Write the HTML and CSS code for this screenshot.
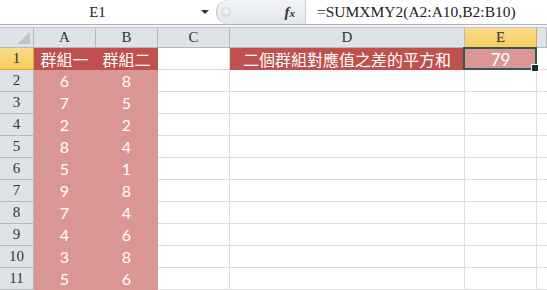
FILE: index.html
```html
<!DOCTYPE html>
<html lang="zh-TW">
<head>
    <meta charset="UTF-8">
    <title>SUMXMY2</title>
    <link rel="stylesheet" href="styles.css">
</head>
<body>
    <div class="formula-bar">
        <div class="name-box">
            <span class="name-text">E1</span>
            <span class="name-arrow"></span>
        </div>
        <div class="bar-tools">
            <span class="grip"></span>
            <span class="fx"><i>f</i><small>x</small></span>
        </div>
        <div class="formula-input">=SUMXMY2(A2:A10,B2:B10)</div>
    </div>
    <div class="bar-gap"></div>

    <div id="sheet" class="sheet"></div>

    <script>
        // 工作表資料
        const cols = ['A', 'B', 'C', 'D', 'E', ''];
        const groupA = [6, 7, 2, 8, 5, 9, 7, 4, 3, 5];
        const groupB = [8, 5, 2, 4, 1, 8, 4, 6, 8, 6];

        function cell(cls, text) {
            const el = document.createElement('div');
            el.className = 'cell ' + cls;
            el.textContent = text || '';
            return el;
        }

        function renderSheet() {
            const sheet = document.getElementById('sheet');

            // 欄標題
            sheet.appendChild(cell('corner'));
            cols.forEach(c => {
                sheet.appendChild(cell('col-head' + (c === 'E' ? ' active' : ''), c));
            });

            // 第 1 列
            sheet.appendChild(cell('row-head active', '1'));
            sheet.appendChild(cell('title', '群組一'));
            sheet.appendChild(cell('title', '群組二'));
            sheet.appendChild(cell(''));
            sheet.appendChild(cell('title', '二個群組對應值之差的平方和'));
            sheet.appendChild(cell('data selected', '79'));
            sheet.appendChild(cell('last'));

            // 第 2 ~ 11 列
            groupA.forEach((a, i) => {
                sheet.appendChild(cell('row-head', String(i + 2)));
                sheet.appendChild(cell('data', a));
                sheet.appendChild(cell('data', groupB[i]));
                sheet.appendChild(cell(''));
                sheet.appendChild(cell(''));
                sheet.appendChild(cell(''));
                sheet.appendChild(cell('last'));
            });
        }

        renderSheet();
    </script>
</body>
</html>
```

FILE: styles.css
```css
* {
    margin: 0;
    padding: 0;
    box-sizing: border-box;
}

body {
    width: 547px;
    height: 290px;
    overflow: hidden;
    background: #fff;
    font-family: "Liberation Serif", serif;
    color: #222;
}

/* 資料編輯列 */
.formula-bar {
    display: flex;
    height: 25px;
    border-bottom: 1px solid #abb2ba;
    background: #fff;
}

.name-box {
    width: 216px;
    display: flex;
    align-items: center;
}

.name-text {
    width: 195px;
    text-align: center;
    font-size: 15px;
    line-height: 24px;
}

.name-arrow {
    width: 0;
    height: 0;
    margin-left: 6px;
    border-left: 4px solid transparent;
    border-right: 4px solid transparent;
    border-top: 4px solid #333;
}

.bar-tools {
    width: 90px;
    display: flex;
    align-items: center;
    justify-content: space-between;
    padding: 0 10px 0 4px;
    background: linear-gradient(#f1f3f6, #e3e7ec);
    border-left: 1px solid #b9bfc7;
    border-right: 1px solid #c8ccd2;
    border-radius: 12px 0 0 12px;
}

.grip {
    width: 10px;
    height: 10px;
    border-radius: 50%;
    background: radial-gradient(circle at 50% 40%, #fff, #c9cdd2);
    border: 1px solid #d6d9dd;
}

.fx {
    font-family: "Liberation Serif", serif;
    font-size: 15px;
    font-weight: bold;
    color: #333;
}

.fx small {
    font-size: 11px;
    font-style: italic;
}

.formula-input {
    flex: 1;
    padding-left: 11px;
    font-size: 15.5px;
    line-height: 24px;
    white-space: nowrap;
}

.bar-gap {
    height: 3px;
    background: #f4f5f7;
    border-bottom: 1px solid #c3c7cc;
}

/* 工作表 */
.sheet {
    display: grid;
    grid-template-columns: 34px 62px 62px 72px 235px 72px 1fr;
    grid-template-rows: 20px repeat(11, 22px);
}

.cell {
    border-right: 1px solid #dadcdd;
    border-bottom: 1px solid #dadcdd;
    display: flex;
    align-items: center;
    justify-content: center;
    white-space: nowrap;
}

.corner,
.col-head,
.row-head {
    background: #dfe3e8;
    border-color: #b4b9bf;
    font-size: 15px;
    color: #333;
}

.corner {
    position: relative;
}

.corner::after {
    content: "";
    position: absolute;
    right: 3px;
    bottom: 3px;
    border-left: 13px solid transparent;
    border-bottom: 12px solid #bfc3c8;
}

.col-head.active,
.row-head.active {
    background: linear-gradient(#f9dc8a, #f6cd5e);
    border-color: #e0a93f;
}

.title {
    background: #c0504d;
    border-color: #c0504d;
    color: #fff;
    font-family: "Noto Sans CJK TC", sans-serif;
    font-size: 16px;
}

.data {
    background: #da9694;
    border-color: #da9694;
    color: #fff;
    font-family: Lato, "Liberation Sans", sans-serif;
    font-size: 16px;
}

.last {
    border-right: none;
}

.selected {
    position: relative;
    font-size: 17px;
    padding-top: 1px;
}

.selected::before {
    content: "";
    position: absolute;
    left: -2px;
    top: -1px;
    right: -1px;
    bottom: -1px;
    border: 2px solid #2c5a55;
}

.selected::after {
    content: "";
    position: absolute;
    right: -3px;
    bottom: -3px;
    width: 6px;
    height: 6px;
    background: #1d2b2a;
    border: 1px solid #fff;
}
```
